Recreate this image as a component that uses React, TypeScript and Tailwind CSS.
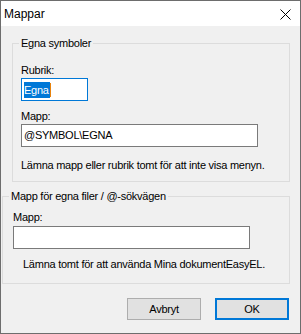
export default function App() {
  return (
    <div className="w-[301px] h-[334px] flex flex-col border border-[#6d6d6d] bg-[#f0f0f0] font-['Liberation_Sans',Arial,sans-serif] text-black">
      {/* Title bar */}
      <div className="h-[25px] bg-white flex items-center justify-between pl-[3px] pr-[9px]">
        <span className="text-[12px] leading-[14px] mt-[1px]">Mappar</span>
        <svg width="11" height="11" viewBox="0 0 11 11" className="mt-[1px]">
          <path d="M0.5 0.5 L10.5 10.5 M10.5 0.5 L0.5 10.5" stroke="#000" strokeWidth="1" />
        </svg>
      </div>

      {/* Client area */}
      <div className="flex-1 flex flex-col text-[11px] leading-[13px] tracking-[-0.25px]">
        {/* Egna symboler */}
        <fieldset className="ml-[11px] mt-[11px] w-[278px] border border-[#dcdcdc]">
          <legend className="ml-[6px] px-[2px] leading-[13px]">Egna symboler</legend>
          <div className="flex flex-col pl-[8px] pt-[14px] pb-[9px]">
            <span>Rubrik:</span>
            <div className="mt-[1px] w-[67px] h-[23px] bg-white border border-[#0078d7] flex items-center pl-[2px]">
              <span className="bg-[#0078d7] text-white h-[16px] leading-[16px] pr-[1px]">Egna</span>
              <span className="w-[1px] h-[14px] bg-[#e8820c]" />
            </div>
            <span className="mt-[9px]">Mapp:</span>
            <div className="mt-[1px] w-[237px] h-[23px] bg-white border border-[#7a7a7a] flex items-center pl-[2px]">
              @SYMBOL\EGNA
            </div>
            <span className="mt-[12px]">Lämna mapp eller rubrik tomt för att inte visa menyn.</span>
          </div>
        </fieldset>

        {/* Mapp för egna filer */}
        <fieldset className="ml-[1px] mt-[8px] w-[288px] border border-[#dcdcdc]">
          <legend className="ml-[6px] px-[2px] leading-[13px]">Mapp för egna filer / @-sökvägen</legend>
          <div className="flex flex-col pl-[10px] pt-[8px] pb-[12px]">
            <span>Mapp:</span>
            <div className="mt-[2px] w-[237px] h-[23px] bg-white border border-[#7a7a7a]" />
            <span className="mt-[9px] ml-[10px]">Lämna tomt för att använda Mina dokumentEasyEL.</span>
          </div>
        </fieldset>

        {/* Buttons */}
        <div className="mt-[14px] flex justify-end gap-[14px] pr-[11px]">
          <button className="w-[74px] h-[22px] bg-[#e1e1e1] border border-[#adadad] flex items-center justify-center">
            Avbryt
          </button>
          <button className="w-[74px] h-[22px] bg-[#e1e1e1] border-2 border-[#0078d7] flex items-center justify-center">
            OK
          </button>
        </div>
      </div>
    </div>
  );
}
